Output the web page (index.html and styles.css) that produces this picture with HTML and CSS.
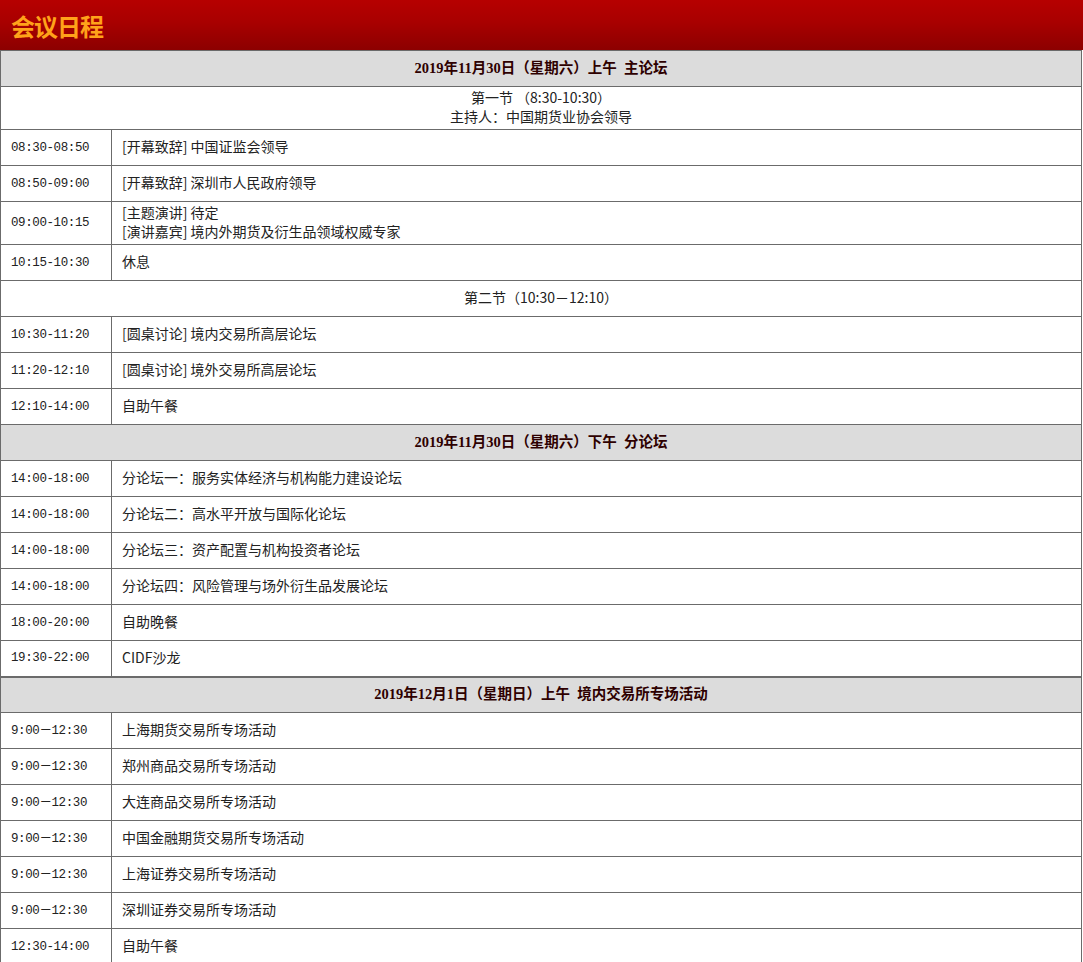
FILE: index.html
```html
<!DOCTYPE html>
<html lang="zh-CN">
<head>
<meta charset="utf-8">
<title>会议日程</title>
<link rel="stylesheet" href="styles.css">
</head>
<body>
<div class="banner"><h1 class="banner-title">会议日程</h1></div>
<table class="agenda">
  <colgroup><col class="col-time"><col class="col-item"></colgroup>
  <tr class="day"><td colspan="2">2019年11月30日（星期六）上午&nbsp;&nbsp;主论坛</td></tr>
  <tr class="session two"><td colspan="2">第一节 （8:30-10:30）<br>主持人：中国期货业协会领导</td></tr>
  <tr><td class="time">08:30-08:50</td><td>[开幕致辞] 中国证监会领导</td></tr>
  <tr><td class="time">08:50-09:00</td><td>[开幕致辞] 深圳市人民政府领导</td></tr>
  <tr class="two"><td class="time">09:00-10:15</td><td>[主题演讲] 待定<br>[演讲嘉宾] 境内外期货及衍生品领域权威专家</td></tr>
  <tr><td class="time">10:15-10:30</td><td>休息</td></tr>
  <tr class="session"><td colspan="2">第二节（10:30－12:10）</td></tr>
  <tr><td class="time">10:30-11:20</td><td>[圆桌讨论] 境内交易所高层论坛</td></tr>
  <tr><td class="time">11:20-12:10</td><td>[圆桌讨论] 境外交易所高层论坛</td></tr>
  <tr><td class="time">12:10-14:00</td><td>自助午餐</td></tr>
  <tr class="day"><td colspan="2">2019年11月30日（星期六）下午&nbsp;&nbsp;分论坛</td></tr>
  <tr><td class="time">14:00-18:00</td><td>分论坛一：服务实体经济与机构能力建设论坛</td></tr>
  <tr><td class="time">14:00-18:00</td><td>分论坛二：高水平开放与国际化论坛</td></tr>
  <tr><td class="time">14:00-18:00</td><td>分论坛三：资产配置与机构投资者论坛</td></tr>
  <tr><td class="time">14:00-18:00</td><td>分论坛四：风险管理与场外衍生品发展论坛</td></tr>
  <tr><td class="time">18:00-20:00</td><td>自助晚餐</td></tr>
  <tr><td class="time">19:30-22:00</td><td>CIDF沙龙</td></tr>
  <tr class="day thick"><td colspan="2">2019年12月1日（星期日）上午&nbsp;&nbsp;境内交易所专场活动</td></tr>
  <tr><td class="time">9:00－12:30</td><td>上海期货交易所专场活动</td></tr>
  <tr><td class="time">9:00－12:30</td><td>郑州商品交易所专场活动</td></tr>
  <tr><td class="time">9:00－12:30</td><td>大连商品交易所专场活动</td></tr>
  <tr><td class="time">9:00－12:30</td><td>中国金融期货交易所专场活动</td></tr>
  <tr><td class="time">9:00－12:30</td><td>上海证券交易所专场活动</td></tr>
  <tr><td class="time">9:00－12:30</td><td>深圳证券交易所专场活动</td></tr>
  <tr><td class="time">12:30-14:00</td><td>自助午餐</td></tr>
</table>
</body>
</html>
```
FILE: styles.css
```css
html, body {
  margin: 0;
  padding: 0;
  background: #ffffff;
}
body {
  font-family: "Noto Sans CJK SC", "Liberation Sans", sans-serif;
  font-size: 14px;
  color: #222222;
}
.banner {
  height: 50px;
  background: linear-gradient(to bottom, #b60000 0%, #a80000 45%, #8c0000 100%);
  display: flex;
  align-items: center;
  padding-left: 11px;
}
.banner-title {
  margin: 0;
  font-size: 24px;
  line-height: 1;
  font-weight: 700;
  color: #ffa21a;
  font-family: "Noto Sans CJK SC", sans-serif;
  letter-spacing: -1px;
  position: relative;
  top: 1px;
}
.agenda {
  width: 1082px;
  border-collapse: collapse;
  table-layout: fixed;
}
.col-time { width: 111px; }
.agenda td {
  border: 1px solid #6b6b6b;
  height: 36px;
  padding: 0 0 3px 10px;
  line-height: 20px;
  vertical-align: middle;
  white-space: nowrap;
  box-sizing: border-box;
}
.agenda tr.two td {
  height: 43px;
  line-height: 19px;
}
.agenda td.time {
  font-family: "Liberation Mono", "DejaVu Sans Mono", "Noto Sans CJK SC", monospace;
  font-size: 12.5px;
  padding: 0 0 0 10px;
  letter-spacing: -0.4px;
}
.agenda tr.day td {
  background: #dcdcdc;
  text-align: center;
  font-family: "Liberation Serif", "Noto Sans CJK SC", serif;
  font-size: 14.5px;
  font-weight: 700;
  color: #2e0000;
  padding: 0 0 1px 0;
}
.agenda tr.day.thick td {
  border-top: 2px solid #6b6b6b;
}
.agenda tr.session td {
  text-align: center;
  padding: 0 0 3px 0;
}
```
